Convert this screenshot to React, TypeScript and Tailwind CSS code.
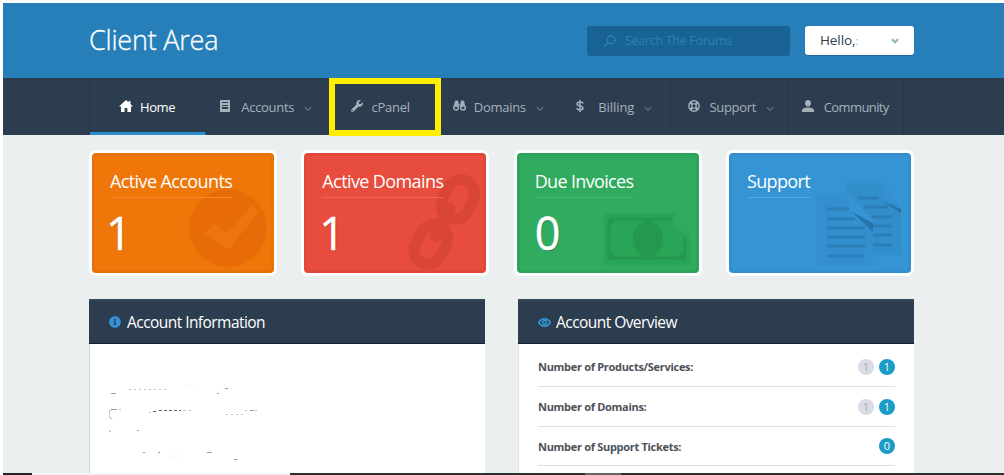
import React from "react";
import { FaWrench, FaInfoCircle } from "react-icons/fa";

const Chevron = ({ className = "" }: { className?: string }) => (
  <svg viewBox="0 0 8 6" className={"h-[6px] w-[8px] shrink-0 " + className} fill="none" stroke="currentColor" strokeWidth="1.3">
    <path d="M1 1.2 4 4.4 7 1.2" />
  </svg>
);

const HomeIcon = () => (
  <svg viewBox="0 0 14 12" className="h-[12px] w-[14px]" fill="currentColor">
    <path d="M7 0 0 6.4h2V12h3.6V8h2.8v4H12V6.4h2L11.4 4V1H9.6v1.4z" />
  </svg>
);

const BookIcon = () => (
  <svg viewBox="0 0 10 12" className="h-[12px] w-[10px]" fill="currentColor">
    <path fillRule="evenodd" d="M0 0h10v12H0zM2 2v1h6V2zM2 5v4h6V5z" />
    <path d="M2 6h6v1H2z" />
  </svg>
);

const BinocularsIcon = () => (
  <svg viewBox="0 0 13 11" className="h-[11px] w-[13px]" fill="none" stroke="currentColor">
    <circle cx="3" cy="7.700" r="2.300" strokeWidth="1.500" />
    <circle cx="10" cy="7.700" r="2.300" strokeWidth="1.500" />
    <path d="M1.500 6 2.400 1h2.300l.8 5zM11.500 6 10.600 1H8.300l-.8 5zM5.500 5h2" fill="currentColor" strokeWidth="1" />
  </svg>
);

const DollarIcon = () => (
  <svg viewBox="0 0 8 12" className="h-[12px] w-[8px]" fill="none" stroke="currentColor" strokeWidth="1.5">
    <path d="M7 3.6C6.8 2.4 5.700 2 4 2S1.100 2.600 1.100 3.900 2.300 5.600 4 5.900s3 .8 3 2.200S5.700 10 4 10 1.100 9.500.900 8.200M4 0v12" />
  </svg>
);

const LifeIcon = () => (
  <svg viewBox="0 0 12 12" className="h-[12px] w-[12px]" fill="none" stroke="currentColor">
    <circle cx="6" cy="6" r="5.2" strokeWidth="1.4" />
    <circle cx="6" cy="6" r="2.200" strokeWidth="1.100" />
    <path d="M2.300 2.300l2 2M9.700 2.300l-2 2M2.300 9.700l2-2M9.700 9.700l-2-2" strokeWidth="2.400" />
  </svg>
);

const UserIcon = () => (
  <svg viewBox="0 0 12 12" className="h-[12px] w-[12px]" fill="currentColor">
    <ellipse cx="6" cy="3.300" rx="2.900" ry="3.300" />
    <path d="M0 12V10C0 8.600 2 8.200 4.300 7.400h3.400C10 8.200 12 8.600 12 10v2z" />
  </svg>
);

const EyeIcon = () => (
  <svg viewBox="0 0 13 9" className="h-[9px] w-[13px]" fill="none" stroke="currentColor">
    <path d="M.8 4.500C3.500-.3 9.500-.3 12.200 4.500 9.500 9.300 3.500 9.300.8 4.500z" strokeWidth="1.700" />
    <circle cx="6.500" cy="4.300" r="1.900" strokeWidth="1.500" />
  </svg>
);

const nav = [
  { label: "Home", icon: <HomeIcon />, pad: "pl-[29px]", gap: "w-[21px]", track: "tracking-[-0.4px]", active: true },
  { label: "Accounts", icon: <BookIcon />, pad: "pl-[14px]", gap: "w-[21px]", track: "tracking-[-0.3px]", menu: true },
  { label: "cPanel", icon: <FaWrench size={12} />, pad: "pl-[28px]", gap: "w-[21px]", track: "tracking-[-0.25px]" },
  { label: "Domains", icon: <BinocularsIcon />, pad: "pl-[14px]", gap: "w-[21px]", track: "tracking-[-0.3px]", menu: true },
  { label: "Billing", icon: <DollarIcon />, pad: "pl-[21px]", gap: "w-[22px]", track: "tracking-[-0.05px]", menu: true },
  { label: "Support", icon: <LifeIcon />, pad: "pl-[17px]", gap: "w-[21px]", track: "tracking-[-0.3px]", menu: true },
  { label: "Community", icon: <UserIcon />, pad: "pl-[14px]", gap: "w-[22px]", track: "tracking-[-0.6px]" },
];

const CheckArt = () => (
  <svg viewBox="0 0 78 78" className="h-[78px] w-[78px]">
    <circle cx="39" cy="39" r="39" fill="#e76c07" />
    <path d="M16 44 26 35l11 10 27-29 6 7-31 38z" fill="#ed750d" />
  </svg>
);

const LinkArt = () => (
  <svg viewBox="0 0 72 98" className="h-[98px] w-[72px]" fill="none" stroke="#d94636" strokeWidth="11">
    <rect x="-14" y="-20" width="28" height="41" rx="14" transform="translate(50 26) rotate(26)" />
    <rect x="-14" y="-20" width="28" height="41" rx="14" transform="translate(23 71) rotate(26)" />
    <path d="M41 36 28 62" strokeLinecap="round" strokeWidth="13" />
  </svg>
);

const MoneyArt = () => (
  <svg viewBox="0 0 88 52" className="h-[52px] w-[88px]">
    <path d="M0 0h72l14 22v30H0z" fill="#29a558" />
    <path d="M5 6h63M5 6v39h76V24" fill="none" stroke="#259850" strokeWidth="3" />
    <path d="M5 6h8l-8 8zM5 45h8l-8-8zM81 45h-8l8-8z" fill="#259850" />
    <ellipse cx="44" cy="26" rx="15" ry="18" fill="#259850" />
    <path d="M72 0 68 12 86 24z" fill="#2fa95e" />
  </svg>
);

const DocsArt = () => (
  <svg viewBox="0 0 86 86" className="h-[86px] w-[86px]">
    <path d="M30 2h38l17 26v46H30z" fill="#328dcb" />
    <path d="M43 17h20M48 26h24M56 36h20M56 45h20M56 54h20M56 64h20" stroke="#2b7fb9" strokeWidth="3" />
    <path d="M68 2v17l17 11V26z" fill="#368fce" />
    <path d="M66 20 85 28v4z" fill="#2874aa" />
    <path d="M0 13h33l24 30v42H0z" fill="#338fcd" />
    <path d="M11 28h24M11 38h28M11 47h38M11 56h38M11 65h38M11 75h38" stroke="#2b7fb9" strokeWidth="3" />
    <path d="M33 13v17l24 17v-8z" fill="#3794d4" />
    <path d="M36 31 57 42v9z" fill="#2874aa" />
  </svg>
);

const cards = [
  { title: "Active Accounts", value: "1", bg: "bg-[#ef770a]", edge: "border-[#e6720a]", line: "border-[#f28a32]", track: "tracking-[-0.6px]", shift: "-ml-[4px]", place: "right-[4px] top-[33px]", art: <CheckArt /> },
  { title: "Active Domains", value: "1", bg: "bg-[#e84c3d]", edge: "border-[#e0483a]", line: "border-[#ec6659]", track: "tracking-[-0.6px]", shift: "-ml-[3px]", place: "right-[3px] top-[17px]", art: <LinkArt /> },
  { title: "Due Invoices", value: "0", bg: "bg-[#30ab60]", edge: "border-[#2ca65a]", line: "border-[#4bb777]", track: "tracking-[-0.65px]", shift: "ml-0", place: "right-[4px] top-[57px]", art: <MoneyArt /> },
  { title: "Support", value: "", bg: "bg-[#3594d3]", edge: "border-[#338fcd]", line: "border-[#58a8dd]", track: "tracking-[-0.65px]", shift: "ml-0", place: "right-[6px] top-[25px]", art: <DocsArt /> },
];

const rows = [
  { label: "Number of Products/Services:", muted: "1", count: "1" },
  { label: "Number of Domains:", muted: "1", count: "1" },
  { label: "Number of Support Tickets:", count: "0" },
];

const PanelHeader = ({ icon, title }: { icon: React.ReactNode; title: string }) => (
  <div className="-ml-px flex h-[45px] items-center border-t-2 border-b border-t-[#34495b] border-b-[#16202b] bg-[#2d3d50] pl-5 text-white">
    <span className="flex w-[18px] text-[#3393d4]">{icon}</span>
    <h2 className="pt-px text-[15.5px] tracking-[-0.55px]">{title}</h2>
  </div>
);

export default function App() {
  return (
    <div className="h-[475px] w-[1004px] overflow-hidden bg-white pt-[3px] pl-[3px] font-['Open_Sans','Noto_Sans',sans-serif]">
      <div className="flex h-[470px] flex-col overflow-hidden bg-[#eceff0]">
        <header className="flex h-[75px] shrink-0 items-start justify-between bg-[#277fba] pr-[90px] pl-[86px]">
          <h1 className="pt-[18px] text-[27px] leading-[38px] font-light tracking-[-0.22px] text-white [-webkit-text-stroke:0.3px_white]">Client Area</h1>
          <div className="flex gap-[15px] pt-[23px]">
            <div className="flex h-[30px] w-[203px] items-center rounded-[3px] bg-[#186294] pl-[16px] text-[#2b81b8]">
              <svg viewBox="0 0 13 12" className="h-[12px] w-[13px]" fill="none" stroke="currentColor" strokeWidth="1.400">
                <circle cx="8" cy="4.800" r="4" />
                <path d="M5 8 1 11.500" />
              </svg>
              <span className="pt-px pl-[9px] text-[12.500px] tracking-[-0.3px]">Search The Forums</span>
            </div>
            <div className="flex h-[29px] w-[109px] items-center justify-between rounded-[3px] bg-white pr-[15px] pl-[15px] text-[#2c3e50] shadow-[0_1px_1px_#1d689b]">
              <span className="text-[13.500px] tracking-[-0.1px]">Hello,<span className="text-[10px] text-[#9aa5ad]">:</span></span>
              <Chevron className="text-[#8fb0b5] [stroke-width:2]" />
            </div>
          </div>
        </header>

        <nav className="h-[57px] shrink-0 bg-[#2d3d50] pl-[86px]">
          <ul className="relative grid h-full w-[815px] grid-cols-7 border-l border-[#28384a]">
            {nav.map((n) => (
              <li
                key={n.label}
                className={
                  "flex items-center border-r border-r-[#28384a] " + n.pad + " " +
                  (n.active ? "border-b-[3px] border-b-[#2e8fce] pt-[5px] text-white" : "pt-[2px] text-[#a5b0b9]")
                }
              >
                <span className={"flex shrink-0 pb-[4px] " + n.gap}>{n.icon}</span>
                <span className={"text-[13px] " + n.track}>{n.label}</span>
                {n.menu && <Chevron className="mt-[3px] ml-[10px] text-[#5f6f7e]" />}
              </li>
            ))}
            <li aria-hidden="true" className="pointer-events-none absolute top-0 left-[239px] h-[58px] w-[112px] border-[6px] border-[#ffee00]" />
          </ul>
        </nav>

        <main className="w-[911px] pl-[86px]">
          <section className="flex justify-between pt-[15px]">
            {cards.map((c) => (
              <article key={c.title} className="h-[126px] w-[188px] rounded-[7px] bg-white p-[3px]">
                <div className={"relative h-[120px] overflow-hidden rounded-[4px] border-[3px] pt-[13px] pl-[15px] text-white " + c.bg + " " + c.edge}>
                  <div className={"absolute " + c.place}>{c.art}</div>
                  <h3 className={"relative inline-block h-[29px] border-b text-[18px] leading-[24px] " + c.line + " " + c.track}>{c.title}</h3>
                  <div className={"relative text-[45px] leading-[70px] [-webkit-text-stroke:0.4px_white] [text-shadow:1px_1px_1px_rgba(0,0,0,.2)] " + c.shift}>{c.value}</div>
                </div>
              </article>
            ))}
          </section>

          <section className="flex justify-between pt-[23px]">
            <div className="h-[180px] w-[396px] border-l border-[#cdd6d9] bg-white">
              <PanelHeader icon={<FaInfoCircle size={12} />} title="Account Information" />
              <svg viewBox="0 0 150 80" className="mt-[40px] ml-[19px] h-[80px] w-[150px]" fill="none" stroke="#7c858d" strokeWidth="1">
                <path d="M2 9.500h5M108 9.500h2M116 4.500h3M8 25.500H2l-2 3v4l3 3M1 46v2M28 46.500h2M34 68.500h2M49 68.500h2M98 68.500h5M125 75.500h3M141 26.500h4" strokeWidth=".8" />
                <path d="M20 5.500h38M40 28.500h5M75 26.500h8M117 30.500h18M136 26.500h12M10 25.500h5" strokeDasharray="2 3" strokeWidth=".5" />
                <path d="M44 27.500h5M50 26.500h22" stroke="#59636d" strokeDasharray="3 2" />
                <path d="M76 1h10M112 1h6M62 67h14M60 74h14" stroke="#e3eff4" strokeDasharray="1 2" />
              </svg>
            </div>
            <div className="h-[180px] w-[396px] border-l border-[#dde2e4] bg-white">
              <PanelHeader icon={<EyeIcon />} title="Account Overview" />
              <div className="pt-[3px] pr-[19px] pl-[19px]">
                {rows.map((r) => (
                  <div key={r.label} className="flex h-[39.8px] items-center gap-[5px] border-b border-[#dddfe1] pt-px">
                    <span className="flex-1 pt-px text-[11px] font-bold tracking-[-0.3px] text-[#4b5158]">{r.label}</span>
                    {r.muted && <b className="h-4 w-4 rounded-full bg-[#d8dce4] text-center text-[11px] leading-4 font-normal text-[#a5abb8]">{r.muted}</b>}
                    <b className="h-4 w-4 rounded-full bg-[#1a9bc8] text-center text-[11px] leading-4 font-normal text-white">{r.count}</b>
                  </div>
                ))}
              </div>
            </div>
          </section>
        </main>
      </div>
      <footer className="flex h-[2px] bg-[#2b322c]">
        <div className="w-[29px] bg-[#252525]" />
        <div className="w-[258px] bg-[#f3f4f4]" />
        <div className="w-[295px]" />
        <div className="w-[36px] bg-[#626762]" />
      </footer>
    </div>
  );
}
